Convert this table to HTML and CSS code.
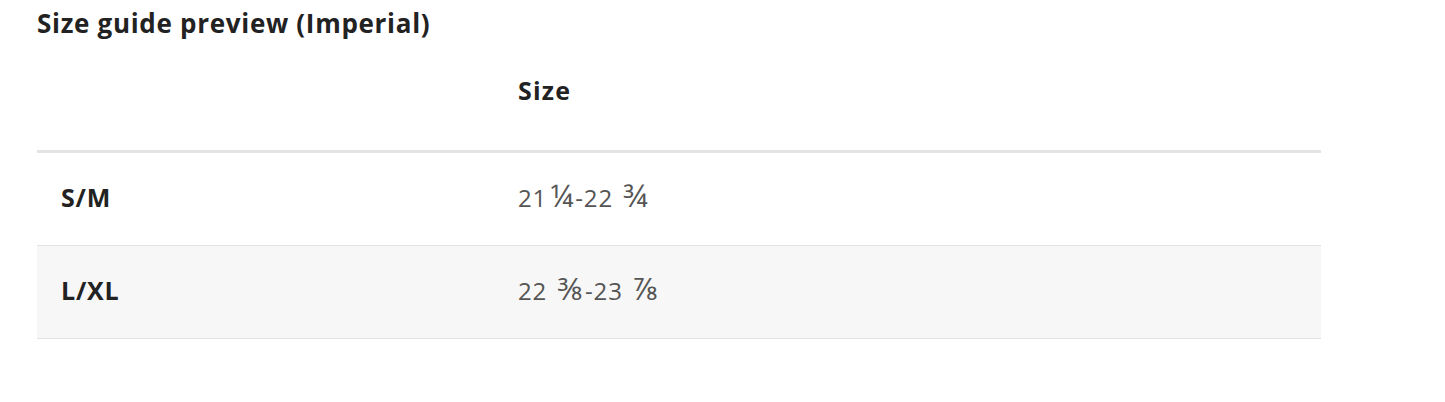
FILE: index.html
```html
<!DOCTYPE html>
<html lang="en">
<head>
    <meta charset="UTF-8">
    <meta name="viewport" content="width=device-width, initial-scale=1.0">
    <title>Size guide preview</title>
    <link rel="stylesheet" href="styles.css">
</head>
<body>
    <div class="size-guide">
        <h2 class="size-guide-title">Size guide preview (Imperial)</h2>
        <table class="size-table">
            <thead>
                <tr>
                    <th class="label-col"></th>
                    <th>Size</th>
                </tr>
            </thead>
            <tbody>
                <tr>
                    <th class="label-col">S/M</th>
                    <td>21<span class="frac">¼</span>-22 <span class="frac">¾</span></td>
                </tr>
                <tr class="alt">
                    <th class="label-col">L/XL</th>
                    <td>22 <span class="frac">⅜</span>-23 <span class="frac">⅞</span></td>
                </tr>
            </tbody>
        </table>
    </div>
</body>
</html>
```

FILE: styles.css
```css
body {
    margin: 0;
    font-family: 'Open Sans', 'Lato', sans-serif;
    background: #fff;
    color: #222;
}

.size-guide {
    padding: 4px 0 0 37px;
    width: 1284px;
}

.size-guide-title {
    margin: 0;
    font-size: 26px;
    font-weight: 700;
    letter-spacing: 0.7px;
    line-height: 38px;
    color: #222;
}

.size-table {
    width: 100%;
    border-collapse: collapse;
}

.size-table thead th {
    height: 96px;
    padding: 0 24px 12px;
    text-align: left;
    font-size: 25px;
    font-weight: 700;
    letter-spacing: 1.2px;
    border-bottom: 3px solid #e3e3e3;
    vertical-align: middle;
}

.size-table .label-col {
    width: 409px;
}

.size-table tbody th,
.size-table tbody td {
    height: 88px;
    padding: 0 24px 4px;
    text-align: left;
    font-size: 24px;
    border-bottom: 1px solid #e3e3e3;
}

.size-table tbody th {
    font-size: 25px;
    font-weight: 700;
    letter-spacing: 0.8px;
    color: #222;
}

.size-table tbody td {
    color: #555;
    font-weight: 400;
    letter-spacing: 0.9px;
}

.size-table .frac {
    font-size: 1.3em;
    line-height: 1;
    margin: 0 1px 0 3px;
}

.size-table .alt {
    background: #f7f7f7;
}
```
